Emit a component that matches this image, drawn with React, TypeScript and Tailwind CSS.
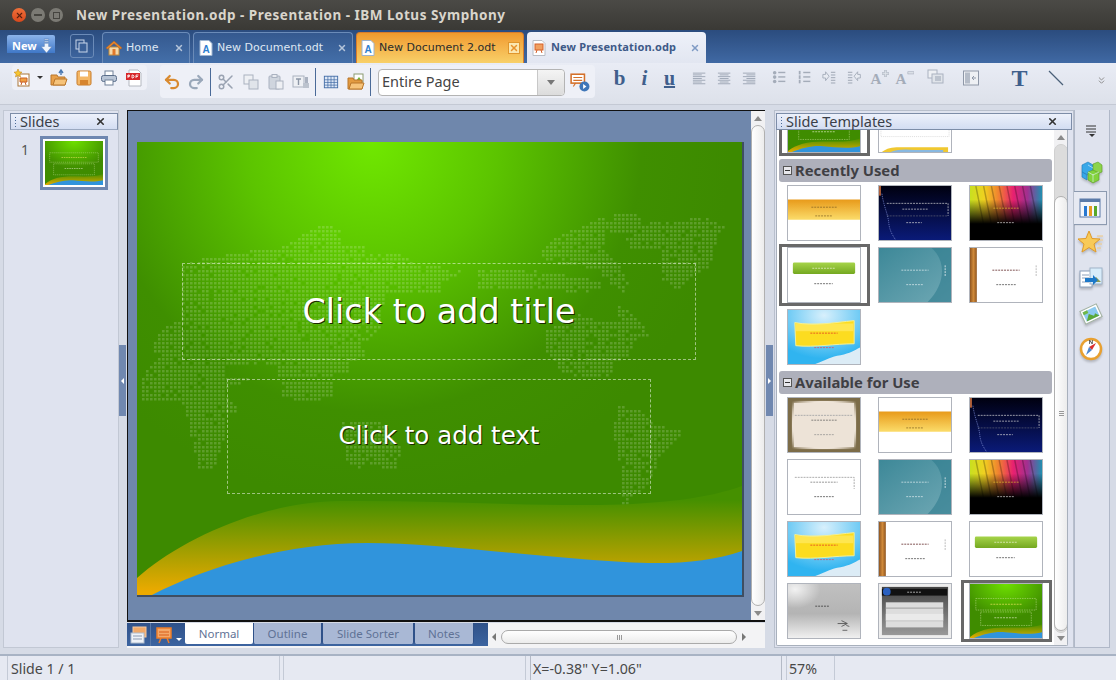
import React from 'react';
import { X, Undo2, Redo2, Scissors, ChevronsDown } from 'lucide-react';

const Slot: React.FC<{ w?: string; children?: React.ReactNode }> = ({ w = 'w-[25px]', children }) => (
  <div className={`${w} h-[24px] shrink-0 flex items-center justify-center`}>{children}</div>
);

const Sep = () => (
  <div className="w-[5px] h-[28px] shrink-0 flex justify-center">
    <div className="w-px h-full bg-[#4a6a98]" />
  </div>
);

const Ico: React.FC<{ s?: number; children: React.ReactNode }> = ({ s = 18, children }) => (
  <svg width={s} height={s} viewBox="0 0 18 18" fill="none">{children}</svg>
);

const NewIcon = () => (
  <Ico>
    <rect x="4" y="5" width="11" height="12" fill="#fff" stroke="#a9763a" />
    <path d="M6 9h7v4H6z" fill="#f0a040" stroke="#c8602a" />
    <path d="M8 13l-1 3M11 13l1 3" stroke="#c8602a" />
    <path d="M4 0l1.2 2.8L8 3.2 5.8 5 6.5 8 4 6.4 1.5 8l.7-3L0 3.2l2.8-.4z" fill="#f6c632" stroke="#c78a1c" strokeWidth=".6" />
  </Ico>
);
const OpenIcon = () => (
  <Ico>
    <path d="M1 6h6l1 2h7v8H1z" fill="#e8a04a" stroke="#b9762a" />
    <path d="M3 16l2-6h12l-2 6z" fill="#f6c37a" stroke="#b9762a" />
    <path d="M11 6V2M9 4l2-3 2 3" stroke="#4a78b0" strokeWidth="1.4" />
  </Ico>
);
const SaveIcon = () => (
  <Ico>
    <rect x="2" y="2" width="14" height="14" rx="1.5" fill="#f4b766" stroke="#c77a28" />
    <rect x="5" y="2.5" width="8" height="5" fill="#fff" />
    <rect x="5" y="11" width="8" height="5" fill="#d6842e" />
  </Ico>
);
const PrintIcon = () => (
  <Ico>
    <rect x="5" y="2" width="8" height="5" fill="#fff" stroke="#70819a" />
    <rect x="1.5" y="6.5" width="15" height="6" rx="2" fill="#b9c5d6" stroke="#5a6e8a" />
    <rect x="5" y="11" width="8" height="5" fill="#fff" stroke="#70819a" />
  </Ico>
);
const PdfIcon = () => (
  <Ico>
    <path d="M4 1h9l3 3v13H4z" fill="#fff" stroke="#b4b8c0" />
    <rect x="1" y="4" width="14" height="7" fill="#d7262a" />
    <path d="M3 6h1.5v1.5H3zM3 6v3M7 6v3h1l1-1V7L8 6zM11 9V6h2.5M11 7.5h2" stroke="#fff" strokeWidth=".8" />
  </Ico>
);
const CopyIcon = ({ c = '#aab2c0' }: { c?: string }) => (
  <Ico>
    <rect x="2" y="2" width="9" height="9" fill="#eef0f4" stroke={c} />
    <rect x="7" y="7" width="9" height="9" fill="#e0e4ea" stroke={c} />
  </Ico>
);
const PasteIcon = () => (
  <Ico>
    <rect x="2" y="3" width="11" height="13" rx="1" fill="#cfd5de" stroke="#aab2c0" />
    <rect x="5" y="1.5" width="5" height="3" fill="#e8ebf0" stroke="#aab2c0" />
    <rect x="9" y="8" width="7" height="8" fill="#eef0f4" stroke="#aab2c0" />
  </Ico>
);
const FormatIcon = () => (
  <Ico>
    <rect x="1" y="3" width="11" height="11" fill="#eef0f4" stroke="#aab2c0" />
    <path d="M4 6h5M6.5 6v6" stroke="#8c96a6" strokeWidth="1.4" />
    <rect x="13" y="4" width="3" height="6" fill="#aab2c0" />
    <rect x="11" y="10" width="6" height="5" fill="#bcc3ce" />
  </Ico>
);
const TableIcon = () => (
  <Ico s={16}>
    <rect x="1.5" y="2.5" width="15" height="13" fill="#dfe9f7" stroke="#3f6aa5" />
    <path d="M1.5 6.5h15M1.5 9.5h15M1.5 12.5h15M5.5 2.5v13M9 2.5v13M12.5 2.5v13" stroke="#3f6aa5" strokeWidth=".8" />
  </Ico>
);
const FolderPicIcon = () => (
  <Ico>
    <rect x="7" y="1" width="9" height="8" fill="#fff" stroke="#8a9a70" />
    <path d="M9 8l3-4 3 4z" fill="#6cb23a" />
    <path d="M1 5h5l1 2h8v9H1z" fill="#e29a40" stroke="#b9762a" />
    <path d="M2 16l2-6h13l-2 6z" fill="#f6c37a" stroke="#b9762a" />
  </Ico>
);
const ShowIcon = () => (
  <Ico s={20}>
    <rect x="1" y="2" width="12" height="8" fill="#fff" stroke="#d4702a" strokeWidth="1.4" />
    <path d="M3 5h8M3 7.500h8" stroke="#d4702a" />
    <path d="M3 13l2-3M11 13l-2-3" stroke="#d4702a" />
    <circle cx="13" cy="13" r="4.500" fill="#3f76b8" />
    <path d="M11.800 10.800l3 2.200-3 2.200z" fill="#fff" />
  </Ico>
);
const Lines = ({ kind }: { kind: 'l' | 'c' | 'r' }) => {
  const rows = [3, 5, 7, 9, 11, 13, 15];
  const short = [false, true, false, true, false, true, false];
  return (
    <Ico s={16}>
      {rows.map((y, i) => {
        const w = short[i] ? 10 : 14;
        const x = kind === 'l' ? 1 : kind === 'r' ? 15 - w : 8 - w / 2;
        return <rect key={y} x={x} y={y} width={w} height="1" fill="#9aa3b2" />;
      })}
    </Ico>
  );
};
const BulletIcon = () => (
  <Ico s={16}>
    {[3, 8, 13].map((y) => (
      <g key={y}>
        <circle cx="3" cy={y} r="2" fill="#a4acb9" />
        <rect x="7" y={y - 1} width="8" height="1.600" fill="#a4acb9" />
      </g>
    ))}
  </Ico>
);
const NumberIcon = () => (
  <Ico s={16}>
    {[3, 8, 13].map((y) => (
      <g key={y}>
        <rect x="2" y={y - 2} width="2" height="4" fill="#a4acb9" />
        <rect x="7" y={y - 1} width="8" height="1.600" fill="#a4acb9" />
      </g>
    ))}
  </Ico>
);
const IndentIcon = ({ flip }: { flip?: boolean }) => (
  <Ico s={16}>
    <g transform={flip ? 'matrix(-1 0 0 1 16 0)' : undefined}>
      <path d="M1 5h3V2l4 5-4 5V9H1z" fill="#e8ebf2" stroke="#a4acb9" />
      {[2, 5, 8, 11, 14].map((y) => (
        <rect key={y} x="10" y={y} width="5" height="1.200" fill="#a4acb9" />
      ))}
    </g>
  </Ico>
);
const FontStep = ({ plus }: { plus?: boolean }) => (
  <div className="relative w-[18px] h-[16px] font-['Liberation_Serif',serif] font-bold text-[15px] leading-[18px] text-[#a4acb9]">
    <span>A</span>
    <svg className="absolute right-0 top-0" width="7" height="7" viewBox="0 0 8 8">
      {plus ? (
        <path d="M3 0h2v3h3v2H5v3H3V5H0V3h3z" fill="#dfe3ea" stroke="#a4acb9" strokeWidth=".7" />
      ) : (
        <rect x="1" y="2" width="7" height="2.500" fill="#dfe3ea" stroke="#a4acb9" strokeWidth=".7" />
      )}
    </svg>
  </div>
);
const ArrangeIcon = () => (
  <Ico>
    <rect x="1" y="1" width="9" height="8" fill="#eef0f4" stroke="#aab2c0" />
    <rect x="5" y="5" width="11" height="9" fill="#e0e4ea" stroke="#aab2c0" />
    <rect x="8" y="7" width="6" height="5" fill="#bcc3ce" />
  </Ico>
);
const SplitIcon = () => (
  <Ico>
    <rect x="1.5" y="2" width="15" height="14" fill="#eef0f4" stroke="#8f98a8" />
    <rect x="3" y="3.500" width="5" height="11" fill="#b5bcc8" />
    <path d="M14 9h-4M12 7l-2 2 2 2" stroke="#8f98a8" />
  </Ico>
);

const Scroll: React.FC<{ thumbTop: string; thumbH: string; className?: string; trough?: boolean; grip?: boolean }> = ({ thumbTop, thumbH, className, trough, grip }) => (
  <div className={`relative w-[14px] bg-[#f1f1f3] ${className ?? ''}`}>
    <svg className="absolute left-[3px] top-[5px]" width="8" height="5" viewBox="0 0 8 5"><path d="M4 0l4 5H0z" fill="#8a8a8a" /></svg>
    {trough && <div className="absolute left-0 w-[14px] top-[14px] bottom-[12px] rounded-full border border-[#d0d0d0] bg-[#dcdcdc]" />}
    <div className={`absolute left-0 w-[14px] ${thumbTop} ${thumbH} rounded-full border border-[#b0b0b0] bg-gradient-to-r from-white to-[#ececec] flex flex-col items-center justify-center gap-px`}>
      {grip && [0, 1, 2].map((i) => <div key={i} className="w-[5px] h-px bg-[#999]" />)}
    </div>
    <svg className="absolute left-[3px] bottom-[4px]" width="8" height="5" viewBox="0 0 8 5"><path d="M4 5l4-5H0z" fill="#8a8a8a" /></svg>
  </div>
);

const Dash: React.FC<{ x: number; y: number; w: number; c?: string }> = ({ x, y, w, c = '#333' }) => (
  <line x1={x} y1={y} x2={x + w} y2={y} stroke={c} strokeWidth="1" strokeOpacity=".7" strokeDasharray="2 1" />
);

type Kind = 'orange' | 'night' | 'rainbow' | 'button' | 'teal' | 'wood' | 'scroll' | 'paper' | 'blank' | 'metal' | 'table' | 'green' | 'plainfoot';

const ThumbArt: React.FC<{ kind: Kind }> = ({ kind }) => {
  const id = `t-${kind}`;
  switch (kind) {
    case 'orange':
      return (
        <>
          <defs><linearGradient id={id} x1="0" y1="0" x2="0" y2="1"><stop offset="0" stopColor="#e89a1a" /><stop offset="1" stopColor="#fbdc6a" /></linearGradient></defs>
          <rect width="74" height="56" fill="#fff" />
          <rect y="14" width="74" height="21" fill={`url(#${id})`} />
          <Dash x={24} y={22} w={26} c="#7a5a20" />
          <Dash x={28} y={31} w={18} c="#7a5a20" />
        </>
      );
    case 'night':
      return (
        <>
          <defs><linearGradient id={id} x1="0" y1="0" x2="0" y2="1"><stop offset="0" stopColor="#000010" /><stop offset="1" stopColor="#0a1a78" /></linearGradient></defs>
          <rect width="74" height="56" fill={`url(#${id})`} />
          <rect width="2" height="10" fill="#b0603a" />
          <path d="M3 8c2 14 6 20 7 30s5 14 7 18" stroke="#6a78c0" strokeDasharray="1 1" fill="none" />
          <path d="M8 18h63v13" fill="none" stroke="#ddd" strokeDasharray="2 1" strokeWidth=".7" />
          <path d="M8 31h63" fill="none" stroke="#888" strokeDasharray="2 1" strokeWidth=".5" />
          <Dash x={24} y={24} w={26} c="#ddd" />
          <Dash x={28} y={38} w={16} c="#ddd" />
        </>
      );
    case 'rainbow':
      return (
        <>
          <defs>
            <linearGradient id={id} x1="0" y1="0" x2="1" y2="0">
              <stop offset="0" stopColor="#c8e020" /><stop offset=".2" stopColor="#f0d020" /><stop offset=".4" stopColor="#f08030" /><stop offset=".6" stopColor="#e82070" /><stop offset=".8" stopColor="#a03090" /><stop offset="1" stopColor="#2090b0" />
            </linearGradient>
            <linearGradient id={`${id}f`} x1="0" y1="0" x2="0" y2="1"><stop offset=".25" stopColor="#000" stopOpacity="0" /><stop offset=".7" stopColor="#000" stopOpacity="1" /></linearGradient>
          </defs>
          <rect width="74" height="56" fill={`url(#${id})`} />
          <path d="M6 0l8 40M14 0l8 40M22 0l8 40M30 0l8 40M38 0l8 40M46 0l8 40M54 0l8 40M62 0l8 40" stroke="#000" strokeOpacity=".25" strokeWidth="1.500" />
          <rect width="74" height="56" fill={`url(#${id}f)`} />
          <Dash x={24} y={23} w={26} c="#e8c030" />
          <Dash x={28} y={38} w={18} c="#ddd" />
        </>
      );
    case 'button':
      return (
        <>
          <defs><linearGradient id={id} x1="0" y1="0" x2="0" y2="1"><stop offset="0" stopColor="#a6d44a" /><stop offset="1" stopColor="#74a820" /></linearGradient></defs>
          <rect width="74" height="56" fill="#fff" />
          <rect x="5" y="15" width="64" height="12" rx="1.500" fill={`url(#${id})`} />
          <Dash x={25} y={21} w={24} c="#f4f8e0" />
          <Dash x={27} y={37} w={19} />
        </>
      );
    case 'teal':
      return (
        <>
          <defs><linearGradient id={id} x1="0" y1="0" x2="1" y2="1"><stop offset="0" stopColor="#3d8898" /><stop offset="1" stopColor="#6fa8b4" /></linearGradient></defs>
          <rect width="74" height="56" fill={`url(#${id})`} />
          <path d="M54 0c14 12 16 36-4 56h24V0z" fill="#2f7c8e" fillOpacity=".6" />
          <path d="M68 18v12" stroke="#cfe0e4" strokeDasharray="2 1" />
          <Dash x={23} y={23} w={28} c="#e8f2f4" />
          <Dash x={28} y={38} w={18} c="#e8f2f4" />
        </>
      );
    case 'wood':
      return (
        <>
          <defs><linearGradient id={id} x1="0" y1="0" x2="1" y2="0"><stop offset="0" stopColor="#8f5520" /><stop offset=".5" stopColor="#d08a3a" /><stop offset="1" stopColor="#8f5520" /></linearGradient></defs>
          <rect width="74" height="56" fill="#fff" />
          <rect width="7" height="56" fill={`url(#${id})`} />
          <path d="M68 18v12" stroke="#bbb" strokeDasharray="2 1" />
          <Dash x={23} y={23} w={28} c="#400" />
          <Dash x={27} y={38} w={20} />
        </>
      );
    case 'scroll':
      return (
        <>
          <defs><radialGradient id={id} cx=".5" cy=".1" r=".8"><stop offset="0" stopColor="#d8f0fc" /><stop offset="1" stopColor="#30b4f0" /></radialGradient></defs>
          <rect width="74" height="56" fill={`url(#${id})`} />
          <path d="M7 13c20 4 40 0 61-2v24c-20 0-40 4-60 2z" fill="#fcdc20" stroke="#f0f0a0" />
          <rect x="8" y="14" width="59" height="8" fill="#fff080" fillOpacity=".5" />
          <Dash x={23} y={24} w={28} c="#e02020" />
          <Dash x={27} y={39} w={20} c="#e04060" />
          <path d="M28 56c12-4 16-8 26-9 10-2 14-5 20-8v17z" fill="#dcecf6" />
        </>
      );
    case 'paper':
      return (
        <>
          <defs><radialGradient id={id} cx=".5" cy=".5" r=".7"><stop offset=".7" stopColor="#eee4d8" /><stop offset="1" stopColor="#7c6c48" /></radialGradient></defs>
          <rect width="74" height="56" fill="#7c6c48" />
          <rect x="4" y="3" width="66" height="50" fill={`url(#${id})`} />
          <rect x="6" y="5" width="62" height="46" fill="#ede3d7" />
          <path d="M7 18h60" stroke="#aaa" strokeDasharray="2 1" />
          <Dash x={24} y={23} w={26} c="#555" />
          <Dash x={27} y={38} w={20} c="#888" />
        </>
      );
    case 'blank':
      return (
        <>
          <rect width="74" height="56" fill="#fff" />
          <path d="M7 18h61v12" fill="none" stroke="#aaa" strokeDasharray="2 1" />
          <Dash x={23} y={23} w={28} c="#666" />
          <Dash x={27} y={38} w={20} />
        </>
      );
    case 'metal':
      return (
        <>
          <defs>
            <linearGradient id={id} x1="0" y1="0" x2="0" y2="1"><stop offset="0" stopColor="#c0c0c0" /><stop offset=".55" stopColor="#b4b4b4" /><stop offset="1" stopColor="#f0f0f0" /></linearGradient>
            <radialGradient id={`${id}g`} cx=".1" cy=".1" r=".35"><stop offset="0" stopColor="#fff" stopOpacity=".8" /><stop offset="1" stopColor="#fff" stopOpacity="0" /></radialGradient>
          </defs>
          <rect width="74" height="56" fill={`url(#${id})`} />
          <rect width="74" height="56" fill={`url(#${id}g)`} />
          <Dash x={28} y={23} w={14} c="#222" />
          <path d="M55 38l6 3-6 3M51 41h9M60 43l3 1M56 48h5" stroke="#333" fill="none" strokeWidth=".7" />
        </>
      );
    case 'table':
      return (
        <>
          <defs><linearGradient id={id} x1="0" y1="0" x2="0" y2="1"><stop offset="0" stopColor="#444" /><stop offset="1" stopColor="#999" /></linearGradient></defs>
          <rect width="74" height="56" fill="#eee" />
          <rect x="3" y="3" width="68" height="50" fill={`url(#${id})`} />
          <rect x="3" y="5" width="67" height="7" fill="#111" />
          <circle cx="8" cy="8" r="4" fill="#2a60c0" />
          <Dash x={29} y={8.500} w={14} c="#eee" />
          <rect x="7" y="19" width="59" height="26" fill="#ddd" />
          <path d="M7 25h59M7 38h59" stroke="#999" strokeWidth="1" />
          <rect x="7" y="31" width="59" height="7" fill="#eaeaea" />
        </>
      );
    case 'green':
      return <GreenArt />;
    case 'plainfoot':
      return (
        <>
          <rect width="74" height="56" fill="#fff" />
          <path d="M2 0v40h70V0" fill="none" stroke="#ddd" strokeDasharray="1 1" />
          <Dash x={28} y={6} w={20} />
          <Dash x={30} y={10} w={14} />
          <path d="M3 56c5-4 10-5 18-5h50v5z" fill="#f0c830" />
          <path d="M12 56c8-3 16-3 24-2h30v2z" fill="#88b8e0" />
        </>
      );
  }
};

const GreenArt = () => (
  <>
    <defs>
      <radialGradient id="gt" cx=".5" cy="0" r=".9"><stop offset="0" stopColor="#6ee000" /><stop offset=".7" stopColor="#3f8c00" /></radialGradient>
      <linearGradient id="gy" x1="0" y1="0" x2="0" y2="1"><stop offset="0" stopColor="#4a9000" /><stop offset="1" stopColor="#e5ac00" /></linearGradient>
    </defs>
    <rect width="74" height="56" fill="url(#gt)" />
    <path d="M0 55c8-7 20-10 36-10 14 0 28 1 38-3v14H0z" fill="url(#gy)" />
    <path d="M4 56c10-4 22-7 32-6 12 1 26 3 38 0v6z" fill="#3094dc" />
    <rect x="6" y="15" width="62" height="12" fill="none" stroke="#cfe8a0" strokeWidth=".5" strokeDasharray="1.500 1" />
    <rect x="11" y="29" width="52" height="14" fill="none" stroke="#cfe8a0" strokeWidth=".5" strokeDasharray="1.500 1" />
    <Dash x={21} y={21} w={32} c="#f0e860" />
    <Dash x={25} y={35} w={24} c="#e0f0c0" />
  </>
);

const Thumb: React.FC<{ kind: Kind; selected?: boolean }> = ({ kind, selected }) => (
  <div className="relative w-[74px] h-[56px] border border-[#b0b4bc]">
    <svg className="block w-full h-full" viewBox="0 0 74 56" preserveAspectRatio="none">
      <ThumbArt kind={kind} />
    </svg>
    {selected && <div className="absolute -left-[9px] -top-[4px] w-[91px] h-[62px] border-[3px] border-[#686868]" />}
  </div>
);

const Grid: React.FC<{ items: { kind: Kind; selected?: boolean }[]; className?: string }> = ({ items, className }) => (
  <div className={`grid grid-cols-[repeat(3,91px)] auto-rows-[62px] pl-[10px] ${className ?? ''}`}>
    {items.map((it, i) => (
      <Thumb key={i} kind={it.kind} selected={it.selected} />
    ))}
  </div>
);

const GroupHead: React.FC<{ title: string }> = ({ title }) => (
  <div className="ml-[2px] mb-[3px] w-[273px] h-[23px] rounded-[3px] bg-[#aeb0bb] flex items-center pl-[4px] gap-[3px] font-['Noto_Sans',sans-serif] font-bold text-[14.8px] text-[#3f3f44]">
    <span className="w-[9px] h-[9px] bg-[#e8e8ec] border border-[#555] flex items-center justify-center">
      <span className="w-[5px] h-px bg-[#333]" />
    </span>
    {title}
  </div>
);

const PanelTitle: React.FC<{ title: string; className: string; closeX: string }> = ({ title, className, closeX }) => (
  <div className={`h-[17px] border border-[#7d8da8] bg-gradient-to-b from-[#edf1fb] to-[#d3ddf2] flex items-center font-['Noto_Sans',sans-serif] text-[14.5px] text-[#3a3f48] ${className}`}>
    <span className="w-[9px] h-full flex flex-col justify-center items-center gap-[2px] shrink-0">
      {[0, 1, 2, 3].map((i) => <span key={i} className="w-px h-px bg-[#4a6a98]" />)}
    </span>
    <span className="flex-1 leading-none">{title}</span>
    <X className={closeX} size={11} strokeWidth={3.5} color="#333" />
  </div>
);

const BottomTab: React.FC<{ label: string; w: string; active?: boolean }> = ({ label, w, active }) => (
  <div className={`${w} h-[21px] rounded-b-[2px] flex items-center justify-center font-['Noto_Sans',sans-serif] text-[11.5px] text-[#5f7295] ${active ? 'bg-white' : 'bg-[#a9b8d5] border-l border-r border-[#2f5189]'}`}>
    {label}
  </div>
);

const Tab: React.FC<{ w: string; label: string; icon: React.ReactNode; tone?: 'blue' | 'orange' | 'active' }> = ({ w, label, icon, tone = 'blue' }) => {
  const base =
    tone === 'orange'
      ? "pl-[4px] pr-[3px] gap-[4px] font-['DejaVu_Sans',sans-serif] text-[11px] bg-gradient-to-b from-[#f09a2c] to-[#f8d068] border border-b-0 border-[#d87d2c] text-[#2b2b2b]"
      : tone === 'active'
        ? "pl-[5px] pr-[6px] gap-[5px] font-['Noto_Sans',sans-serif] font-bold text-[11px] tracking-[0.15px] bg-gradient-to-b from-[#eef1f9] to-[#e2e6f1] text-[#3e5a88]"
        : "pl-[5px] pr-[5px] gap-[4px] font-['DejaVu_Sans',sans-serif] text-[11px] bg-gradient-to-b from-[#35598f] to-[#446fa9] border border-b-0 border-[#6b8bb8] text-[#dfe7f3]";
  return (
    <div className={`${w} h-[31px] rounded-t-[4px] shrink-0 flex items-center ${base}`}>
      {icon}
      <span className="flex-1 whitespace-nowrap">{label}</span>
      {tone === 'orange' ? (
        <span className="w-[12px] h-[12px] bg-[#fbe7b0] border border-[#e0962c] flex items-center justify-center"><X size={10} strokeWidth={3.5} color="#e8922a" /></span>
      ) : (
        <X size={10} strokeWidth={3.5} color={tone === 'active' ? '#7f9bc4' : '#b5c4da'} />
      )}
    </div>
  );
};

const DocIcon = () => (
  <svg width="14" height="16" viewBox="0 0 14 16">
    <path d="M1 .5h9l3 3v12H1z" fill="#fff" stroke="#9db4d0" />
    <text x="7" y="12.500" textAnchor="middle" fontSize="10" fontWeight="700" fill="#2f7fd0" fontFamily="Liberation Sans">A</text>
  </svg>
);
const PresIcon = () => (
  <svg width="14" height="16" viewBox="0 0 14 16">
    <path d="M1 .5h9l3 3v12H1z" fill="#fff" stroke="#b8bcc4" />
    <rect x="3" y="4" width="8" height="6" fill="#f0a060" stroke="#d4602a" />
    <path d="M5 10l-1 3M9 10l1 3" stroke="#d4602a" />
  </svg>
);
const HomeIcon = () => (
  <svg className="-ml-[2px]" width="16" height="16" viewBox="0 0 16 16">
    <rect x="3" y="7" width="10" height="8" fill="#f4d8a8" stroke="#c08a3a" />
    <rect x="6.500" y="9" width="3" height="6" fill="#e0782a" />
    <path d="M0 8l8-7 8 7-1.500 1L8 3.500 1.500 9z" fill="#e8862a" stroke="#b8601a" strokeWidth=".5" />
  </svg>
);

const mapShapes = [
  '130,190 190,170 300,150 360,150 410,120 450,90 490,65 530,90 530,130 590,135 590,160 690,160 710,185 830,205 840,225 780,240 780,270 640,280 630,390 590,420 590,470 550,480 550,520 370,530 370,490 240,490 240,530 310,530 240,570 270,630 240,640 240,700 210,800 170,800 140,640 130,600 30,600 25,540 60,470 50,430 85,380 130,350 130,260',
  '1040,150 1070,110 1150,70 1190,45 1280,35 1290,70 1350,60 1450,50 1510,80 1480,100 1470,190 1420,225 1380,265 1340,230 1340,150 1260,140 1250,100 1210,100 1190,140 1230,190 1260,240 1250,280 1160,200 1040,180',
  '880,205 1030,210 1190,240 1190,265 1110,280 1080,260 1000,270 880,270',
  '1230,310 1270,340 1310,400 1270,420 1260,470 1220,480 1210,530 1090,520 1050,450 1050,390 1130,340 1190,360 1230,360',
  '1230,615 1290,625 1320,670 1390,690 1380,720 1340,760 1310,850 1260,890 1260,945 1240,945 1240,830 1220,690',
  '535,655 640,660 680,740 675,810 640,810 630,790 570,800 540,780',
  '380,540 510,540 510,590 400,605 380,590',
].map((s) =>
  s.split(' ').map((p) => {
    const [x, y] = p.split(',').map(Number);
    return [130 + x * 0.3954, 200 + y / 3];
  }),
);

const inside = (x: number, y: number, poly: number[][]) => {
  let hit = false;
  for (let i = 0, j = poly.length - 1; i < poly.length; j = i++) {
    const [xi, yi] = poly[i];
    const [xj, yj] = poly[j];
    if (yi > y !== yj > y && x < ((xj - xi) * (y - yi)) / (yj - yi) + xi) hit = !hit;
  }
  return hit;
};

// dotted world map, a few cells dropped so the edges look rough
const mapDots = (() => {
  let d = '';
  for (let y = 214; y < 520; y += 4) {
    for (let x = 138; x < 740; x += 4) {
      const skip = ((x * 7 + y * 13) ^ (x * y)) % 9 === 0;
      if (!skip && mapShapes.some((p) => inside(x, y, p))) d += `M${x} ${y}h2.6v2.6h-2.6z`;
    }
  }
  return d;
})();

const SlideArt = () => (
  <svg className="absolute inset-0" width="605" height="453" viewBox="137 142 605 453">
    <defs>
      <radialGradient id="sl" gradientUnits="userSpaceOnUse" cx="372" cy="142" r="360">
        <stop offset="0" stopColor="#70e800" />
        <stop offset=".35" stopColor="#5cc400" />
        <stop offset=".75" stopColor="#3f8f00" />
        <stop offset="1" stopColor="#3d8a00" />
      </radialGradient>
      <linearGradient id="band" gradientUnits="userSpaceOnUse" x1="0" y1="500" x2="0" y2="592">
        <stop offset="0" stopColor="#459000" />
        <stop offset="1" stopColor="#ecaa00" />
      </linearGradient>
    </defs>
    <rect x="137" y="142" width="605" height="453" fill="url(#sl)" />
    <path d={mapDots} fill="#fff" fillOpacity=".17" />
    <path d="M137 578C180 540 260 502 340 501C430 500 520 506 600 505C660 504 710 498 742 486V595H137Z" fill="url(#band)" />
    <path d="M152 595C200 570 280 543 367 543C440 543 520 556 624 562C670 565 710 562 742 551V595Z" fill="#3094dc" />
  </svg>
);

const CubesIcon = () => (
  <svg width="24" height="24" viewBox="0 0 24 24">
    <path d="M3 5l6-3 5 3v7l-5 3-6-3z" fill="#38a8e8" stroke="#1c78b8" strokeWidth=".6" />
    <path d="M14 4l5-2 4 3v7l-5 2-4-2z" fill="#8cd44a" stroke="#5a9c24" strokeWidth=".6" />
    <path d="M9 12l5-2 6 3v7l-6 3-5-3z" fill="#82d23c" stroke="#5a9c24" strokeWidth=".6" />
    <path d="M3 12l5 3v5l-5-3z" fill="#38a8e8" stroke="#1c78b8" strokeWidth=".6" />
    <path d="M9 5l5 3M14 14v8M9 12l5 3 6-3" stroke="#e8f4ff" strokeWidth=".6" fill="none" />
  </svg>
);
const ChartIcon = () => (
  <svg width="24" height="24" viewBox="0 0 24 24">
    <rect x="2" y="3" width="20" height="18" fill="#f4f6fa" stroke="#5a7aa8" />
    <rect x="2" y="3" width="20" height="3" fill="#5a7aa8" />
    <rect x="6" y="10" width="3" height="10" fill="#2878d0" />
    <rect x="11" y="10" width="3" height="10" fill="#e89a20" />
    <rect x="16" y="10" width="3" height="10" fill="#58a828" />
  </svg>
);
const StarIcon = () => (
  <svg width="26" height="24" viewBox="0 0 26 24">
    <path d="M19 6h6M20 10h5M20 14h4M19 18h4" stroke="#f0c880" />
    <path d="M11 1l3 7.500 8 .5-6 5 2 8-7-4.500L4 22l2-8-6-5 8-.5z" fill="#f8ca58" stroke="#e09a28" />
  </svg>
);
const SendIcon = () => (
  <svg width="24" height="24" viewBox="0 0 24 24">
    <rect x="1" y="5" width="12" height="16" fill="#fff" stroke="#8ca0ba" />
    <path d="M3 9h7M3 12h7M3 16h7" stroke="#8ca0ba" />
    <rect x="11" y="2" width="12" height="16" fill="#d8ecfa" stroke="#a0b4c8" />
    <path d="M13 16l4-5 5 5z" fill="#8a9a50" />
    <path d="M6 12h8V9l5 5-5 5v-3H6z" fill="#1c78c8" />
  </svg>
);
const PicIcon = () => (
  <svg width="24" height="24" viewBox="0 0 24 24">
    <g transform="rotate(-25 12 12)">
      <rect x="3" y="5" width="18" height="14" fill="#fff" stroke="#a0b0a0" />
      <rect x="5" y="7" width="14" height="10" fill="#8ccaf0" />
      <path d="M5 17l5-6 4 4 2-2 3 4z" fill="#5aa838" />
      <rect x="5" y="7" width="5" height="3" fill="#70b848" />
    </g>
  </svg>
);
const CompassIcon = () => (
  <svg width="24" height="24" viewBox="0 0 24 24">
    <circle cx="12" cy="12" r="10" fill="#fff" stroke="#e8a030" strokeWidth="2.500" />
    <path d="M17 6l-4 7-3-3z" fill="#d83030" />
    <path d="M7 18l3-8 3 3z" fill="#4a86d0" />
    <text x="12" y="7" textAnchor="middle" fontSize="6" fontWeight="700" fill="#444" fontFamily="Liberation Sans">N</text>
  </svg>
);

const SideIcon: React.FC<{ h: string; children: React.ReactNode }> = ({ h, children }) => (
  <div className={`${h} w-full flex items-center justify-center pr-[2px] drop-shadow-[0_2px_1px_rgba(0,0,0,0.2)]`}>{children}</div>
);

export default function App() {
  return (
    <div className="w-[1116px] h-[680px] overflow-hidden flex flex-col bg-[#dfe3ee] font-['Noto_Sans',sans-serif]">
      {/* title bar */}
      <div className="h-[30px] shrink-0 bg-gradient-to-b from-[#4b4a46] to-[#3a3935] flex items-center pl-[12px]">
        <span className="w-[14px] h-[14px] rounded-full bg-gradient-to-b from-[#f0703a] to-[#d8481c] flex items-center justify-center"><X size={9} strokeWidth={3} color="#5a2010" /></span>
        <span className="ml-[5px] w-[14px] h-[14px] rounded-full bg-[#7b7a74] flex items-center justify-center"><span className="w-[8px] h-[2px] bg-[#45443f]" /></span>
        <span className="ml-[4px] w-[14px] h-[14px] rounded-full bg-[#7b7a74] flex items-center justify-center"><span className="w-[7px] h-[7px] border border-[#45443f]" /></span>
        <span className="ml-[13px] text-[13.5px] font-bold tracking-[0.5px] text-[#d9d5cc] whitespace-nowrap">New Presentation.odp - Presentation - IBM Lotus Symphony</span>
      </div>

      {/* tab bar */}
      <div className="h-[33px] shrink-0 bg-gradient-to-b from-[#2b4c7e] to-[#4069a4] flex items-end pl-[7px]">
        <div className="relative self-start mt-[5px] w-[48px] h-[18px] bg-gradient-to-b from-[#8cb4ea] to-[#3f78c8] rounded-t-[2px] flex items-end pl-[5px] text-[11px] leading-[15px] font-bold text-white">
          New
          <svg className="absolute right-[2px] top-[3px]" width="13" height="17" viewBox="0 0 12 14"><path d="M4 0h4v1H4zM4 2h4v1H4zM4 4h4v3h3l-5 6-5-6h3z" fill="#eef3fb" stroke="#5a80b8" strokeWidth=".5" /></svg>
        </div>
        <div className="self-start mt-[4px] ml-[15px] w-[24px] h-[24px] rounded-[3px] border border-[#6b8bb8] flex items-center justify-center">
          <svg width="14" height="14" viewBox="0 0 14 14"><rect x="1" y="1" width="8" height="9" fill="none" stroke="#c8d6ea" /><rect x="4" y="4" width="8" height="9" fill="#3b6198" stroke="#c8d6ea" /></svg>
        </div>
        <div className="ml-[8px] flex gap-[3px]">
          <Tab w="w-[88px]" label="Home" icon={<HomeIcon />} />
          <Tab w="w-[160px]" label="New Document.odt" icon={<DocIcon />} />
          <Tab w="w-[168px]" label="New Document 2.odt" icon={<DocIcon />} tone="orange" />
          <Tab w="w-[179px]" label="New Presentation.odp" icon={<PresIcon />} tone="active" />
        </div>
      </div>

      {/* toolbar */}
      <div className="h-[42px] shrink-0 bg-gradient-to-b from-[#e9ecf5] to-[#dde1ea] border-b border-[#c4c9d4] flex items-start pt-[2px] pl-[12px]">
        <div className="h-[25px] w-[135px] rounded-[4px] bg-[#eef0f7] flex items-center shrink-0">
          <Slot w="w-[22px]"><NewIcon /></Slot>
          <Slot w="w-[12px]"><span className="border-x-[3px] border-x-transparent border-t-[3px] border-t-[#333]" /></Slot>
          <Slot><OpenIcon /></Slot>
          <Slot><SaveIcon /></Slot>
          <Slot><PrintIcon /></Slot>
          <Slot><PdfIcon /></Slot>
        </div>
        <div className="ml-[13px] h-[33px] w-[435px] rounded-[4px] bg-[#eef0f7] flex items-center shrink-0 pt-px">
          <Slot w="w-[23px]"><Undo2 size={18} strokeWidth={3} color="#d98a30" /></Slot>
          <Slot><Redo2 size={18} strokeWidth={3} color="#9aa8ba" /></Slot>
          <Sep />
          <Slot><Scissors size={18} strokeWidth={2} color="#9aa3b2" /></Slot>
          <Slot><CopyIcon /></Slot>
          <Slot><PasteIcon /></Slot>
          <Slot><FormatIcon /></Slot>
          <Sep />
          <Slot><TableIcon /></Slot>
          <Slot><FolderPicIcon /></Slot>
          <Sep />
          <div className="ml-[5px] w-[187px] h-[27px] shrink-0 rounded-[4px] border border-[#b4b4b4] bg-white flex items-center text-[14.5px] text-[#444]">
            <span className="flex-1 pl-[3px]">Entire Page</span>
            <span className="w-[27px] h-full rounded-r-[4px] border-l border-[#c8c8c8] bg-gradient-to-b from-[#f4f4f4] to-[#dcdcdc] flex items-center justify-center">
              <span className="border-x-[4px] border-x-transparent border-t-[5px] border-t-[#777]" />
            </span>
          </div>
          <Slot w="w-[30px]"><ShowIcon /></Slot>
        </div>
        <div className="ml-[12px] flex items-center h-[26px]">
          <Slot><span className="font-['Liberation_Serif',serif] font-bold text-[21px] leading-none text-[#3f5f8c]">b</span></Slot>
          <Slot><span className="font-['Liberation_Serif',serif] font-bold italic text-[21px] leading-none text-[#3f5f8c]">i</span></Slot>
          <Slot><span className="font-['Liberation_Serif',serif] font-bold underline text-[20px] leading-none text-[#3f5f8c]">u</span></Slot>
          <div className="w-[5px]" />
          <Slot><Lines kind="l" /></Slot>
          <Slot><Lines kind="c" /></Slot>
          <Slot><Lines kind="r" /></Slot>
          <div className="w-[5px]" />
          <Slot><BulletIcon /></Slot>
          <Slot><NumberIcon /></Slot>
          <Slot><IndentIcon /></Slot>
          <Slot><IndentIcon flip /></Slot>
          <Slot><FontStep plus /></Slot>
          <Slot><FontStep /></Slot>
          <div className="w-[6px]" />
          <Slot><ArrangeIcon /></Slot>
          <div className="w-[10px]" />
          <Slot><SplitIcon /></Slot>
          <div className="w-[24px]" />
          <Slot><span className="font-['Liberation_Serif',serif] font-bold text-[24px] leading-none text-[#3f5f8c]">T</span></Slot>
          <div className="w-[11px]" />
          <Slot><svg width="18" height="18" viewBox="0 0 18 18"><path d="M2 2l14 14" stroke="#4a6078" strokeWidth="1.300" /></svg></Slot>
          <div className="w-[21px]" />
          <Slot><ChevronsDown className="mt-[5px]" size={11} color="#888" /></Slot>
        </div>
      </div>

      {/* main area */}
      <div className="h-[549px] shrink-0 flex pt-[5px] pb-[6px] pl-[3px] bg-[#d6dbe6]">
        {/* slides panel */}
        <div className="w-[116px] shrink-0 bg-[#dfe3ef] border border-[#c2c8d4] pt-[2px] pl-[6px]">
          <PanelTitle title="Slides" className="w-[108px] border-b-[#9aa8c0]" closeX="mr-[11px]" />
          <div className="flex mt-[6px]">
            <span className="w-[30px] pl-[11px] pt-[3px] text-[14px] text-[#555]">1</span>
            <div className="w-[68px] h-[54px] border-[3px] border-[#6f87b0] p-[2px] bg-white">
              <svg className="block w-full h-full" viewBox="0 0 74 56" preserveAspectRatio="none"><GreenArt /></svg>
            </div>
          </div>
        </div>

        {/* left splitter */}
        <div className="w-[8px] shrink-0 flex items-start pt-[235px]">
          <div className="w-[7px] h-[71px] bg-[#7088b0] flex items-center justify-center">
            <span className="border-y-[3px] border-y-transparent border-r-[3px] border-r-white" />
          </div>
        </div>

        {/* editor */}
        <div className="w-[638px] shrink-0 flex flex-col">
          <div className="h-[512px] shrink-0 flex border-t border-l border-b-2 border-[#111] border-r-0">
            <div className="w-[623px] h-full bg-[#6f87ac] pt-[31px] pl-[9px] shrink-0">
              <div className="relative w-[605px] h-[453px] shadow-[1px_1px_0_1px_#3e4e62]">
                <SlideArt />
                <div className="absolute left-[45px] top-[121px] w-[514px] h-[97px] pt-px border border-dashed border-white/50 flex items-center justify-center font-['DejaVu_Sans',sans-serif] text-[33.4px] text-white [text-shadow:1px_1px_0_#1a2a00]">Click to add title</div>
                <div className="absolute left-[90px] top-[237px] w-[424px] h-[115px] border border-dashed border-white/50 flex items-center justify-center font-['DejaVu_Sans',sans-serif] text-[24.5px] text-white [text-shadow:1px_1px_0_#1a2a00]">Click to add text</div>
              </div>
            </div>
            <Scroll thumbTop="top-[14px]" thumbH="bottom-[14px]" className="h-full" />
          </div>
          <div className="flex items-start mt-[1px] bg-[#f3f3f5] h-[26px]">
            <div className="w-[361px] h-[23px] bg-gradient-to-b from-[#2f5189] to-[#3c64a0] flex items-start shrink-0">
              <div className="w-[24px] h-full flex items-center justify-center border-r border-[#5878a8]">
                <svg width="18" height="18" viewBox="0 0 18 18"><rect x="3" y="1" width="13" height="10" fill="#f0a868" stroke="#f4c8a0" /><rect x="1" y="7" width="13" height="10" fill="#eef2f8" stroke="#b0bccc" /><path d="M3 10h9M3 13h9" stroke="#8c9ab0" /></svg>
              </div>
              <div className="w-[34px] h-full flex items-center pl-[4px] gap-[3px]">
                <svg width="18" height="18" viewBox="0 0 18 18"><rect x="2" y="2" width="14" height="10" fill="#f4a868" stroke="#ec7c28" strokeWidth="1.500" /><path d="M4 6h10M4 9h10" stroke="#d85c18" /><path d="M6 12l-2 5M12 12l2 5" stroke="#ec7c28" strokeWidth="1.500" /></svg>
                <span className="mt-[10px] border-x-[3px] border-x-transparent border-t-[3px] border-t-white" />
              </div>
              <BottomTab label="Normal" w="w-[68px]" active />
              <BottomTab label="Outline" w="w-[69px]" />
              <BottomTab label="Slide Sorter" w="w-[92px]" />
              <BottomTab label="Notes" w="w-[60px]" />
            </div>
            <div className="relative w-[262px] h-[15px] mt-[7px]">
              <span className="absolute left-[4px] top-[3px] border-y-[4px] border-y-transparent border-r-[4px] border-r-[#777]" />
              <div className="absolute left-[13px] right-[13px] top-0 h-[14px] rounded-full border border-[#aaa] bg-gradient-to-b from-white to-[#ececec] flex items-center justify-center gap-px">
                {[0, 1, 2].map((i) => <span key={i} className="w-px h-[5px] bg-[#999]" />)}
              </div>
              <span className="absolute right-[4px] top-[3px] border-y-[4px] border-y-transparent border-l-[4px] border-l-[#777]" />
            </div>
          </div>
        </div>

        {/* right splitter */}
        <div className="w-[9px] shrink-0 flex items-start justify-end pr-px pt-[235px]">
          <div className="w-[7px] h-[71px] bg-[#7088b0] flex items-center justify-center">
            <span className="border-y-[3px] border-y-transparent border-l-[3px] border-l-white" />
          </div>
        </div>

        {/* slide templates */}
        <div className="relative w-[300px] shrink-0 h-[538px] bg-[#dfe3ef] border border-[#b8bfcc] pt-[2px] pl-[1px]">
          <PanelTitle title="Slide Templates" className="w-[296px]" closeX="mr-[13px]" />
          <div className="w-[292px] h-[516px] flex border border-t-0 border-[#a8b0bc] rounded-b-[2px] bg-white overflow-hidden">
            <div className="w-[277px] overflow-hidden shrink-0">
              <Grid className="-mt-[33px]" items={[{ kind: 'green', selected: true }, { kind: 'plainfoot' }]} />
              <GroupHead title="Recently Used" />
              <Grid items={[{ kind: 'orange' }, { kind: 'night' }, { kind: 'rainbow' }, { kind: 'button', selected: true }, { kind: 'teal' }, { kind: 'wood' }, { kind: 'scroll' }]} />
              <GroupHead title="Available for Use" />
              <Grid items={[{ kind: 'paper' }, { kind: 'orange' }, { kind: 'night' }, { kind: 'blank' }, { kind: 'teal' }, { kind: 'rainbow' }, { kind: 'scroll' }, { kind: 'wood' }, { kind: 'button' }, { kind: 'metal' }, { kind: 'table' }, { kind: 'green', selected: true }]} />
            </div>
            <Scroll thumbTop="top-[66px]" thumbH="bottom-[14px]" trough grip className="h-full" />
          </div>
        </div>

        {/* sidebar */}
        <div className="relative w-[36px] shrink-0 h-[538px] bg-[#dfe3ee] border-l border-r border-b border-[#b0b8c8] flex flex-col items-center">
          <div className="h-[42px] w-full flex items-center justify-center pr-[2px]">
            <svg width="12" height="12" viewBox="0 0 12 12"><path d="M1 1h10M1 4h10M1 7h10" stroke="#333" /><path d="M4 9h6l-3 3z" fill="#333" /></svg>
          </div>
          <SideIcon h="h-[39px]"><CubesIcon /></SideIcon>
          <div className="h-[34px] w-[33px] self-start -ml-px bg-[#e6e9f2] border border-l-0 border-[#8c9ab0] flex items-center justify-center drop-shadow-[0_1px_0_rgba(0,0,0,0.05)]"><ChartIcon /></div>
          <SideIcon h="h-[34px]"><StarIcon /></SideIcon>
          <SideIcon h="h-[37px]"><SendIcon /></SideIcon>
          <SideIcon h="h-[35px]"><PicIcon /></SideIcon>
          <SideIcon h="h-[35px]"><CompassIcon /></SideIcon>
        </div>
      </div>

      {/* status bar */}
      <div className="h-[26px] shrink-0 bg-[#e6e9f2] border-t-2 border-[#a8b3c4] flex text-[14.2px] text-[#484848] pl-[7px] leading-[26px]">
        <div className="w-[273px] border-l border-r border-[#c4cad6] pl-[3px]">Slide 1 / 1</div>
        <div className="ml-[3px] w-[243px] border-l border-r border-[#c4cad6]" />
        <div className="ml-[4px] w-[252px] border-l border-r border-[#b4bac6] pl-[2px]">X=-0.38&quot; Y=1.06&quot;</div>
        <div className="ml-[4px] w-[49px] border-l border-r border-[#c4cad6] pl-[2px]">57%</div>
      </div>
    </div>
  );
}
